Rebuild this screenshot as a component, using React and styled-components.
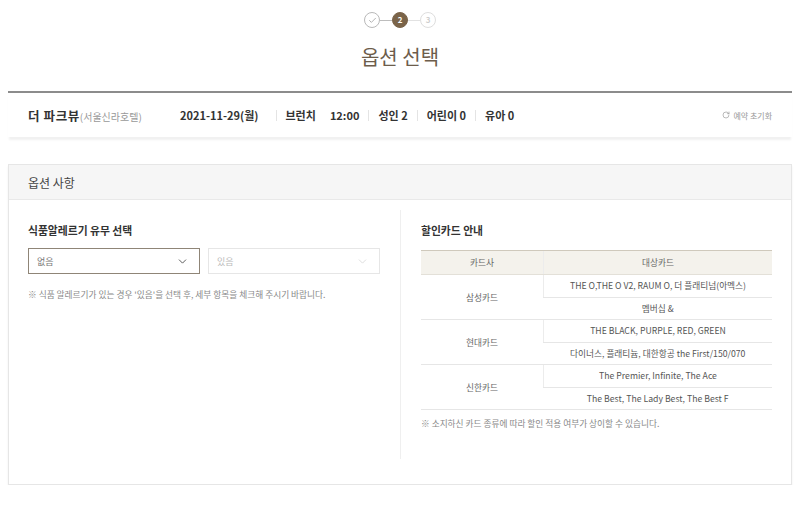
import React from 'react'
import styled, { createGlobalStyle } from 'styled-components'
import { ChevronDown, RotateCw, Check } from 'lucide-react'

const GlobalStyle = createGlobalStyle`
    body {
        margin: 0;
        background: #fff;
        font-family: 'Noto Sans CJK KR', 'Noto Sans', sans-serif;
        color: #333;
    }
`

const Page = styled.div`
    width: 800px;
    padding: 0 8px;
    box-sizing: border-box;
`
const Steps = styled.div`
    display: flex;
    justify-content: center;
    align-items: center;
    padding-top: 12px;
`
const Step = styled.div`
    width: 16px;
    height: 16px;
    box-sizing: border-box;
    border-radius: 50%;
    display: flex;
    align-items: center;
    justify-content: center;
    font-size: 8px;
    font-weight: 700;
    line-height: 1;
    border: 1px solid ${p => (p.$state === 'done' ? '#b9b9b9' : p.$state === 'active' ? '#7a6449' : '#dedede')};
    background: ${p => (p.$state === 'active' ? '#7a6449' : '#fff')};
    color: ${p => (p.$state === 'active' ? '#fff' : '#cfcfcf')};
`
const StepLine = styled.div`
    width: 12px;
    height: 1px;
    background: ${p => p.$color};
`
const Title = styled.h1`
    margin: 15px 0 0;
    text-align: center;
    font-size: 20px;
    line-height: 28px;
    font-weight: 400;
    color: #6d5d4b;
`
const Summary = styled.div`
    margin-top: 20px;
    border-top: 2px solid #8c8c8c;
    height: 44px;
    padding: 0 20px;
    display: flex;
    align-items: center;
    box-shadow: 0 4px 2px -1px #f1f1f1;
`
const Venue = styled.div`
    width: 152px;
    font-size: 12.5px;
    font-weight: 700;
    color: #333;
    white-space: nowrap;
    letter-spacing: 0.6px;
    small {
        font-size: 10px;
        font-weight: 400;
        color: #999;
        letter-spacing: 0;
    }
`
const Info = styled.span`
    font-size: 11px;
    font-weight: 700;
    color: #333;
    margin-right: ${p => p.$gap || 0}px;
    white-space: nowrap;
`
const Sep = styled.span`
    width: 1px;
    height: 11px;
    background: #e4e4e4;
    margin: 0 9px;
`
const Reset = styled.div`
    margin-left: auto;
    display: flex;
    align-items: center;
    gap: 3px;
    font-size: 8px;
    color: #999;
`
const Panel = styled.section`
    margin-top: 27px;
    border: 1px solid #e6e6e6;
    box-shadow: 0 2px 2px #f0f0f0;
`
const PanelHead = styled.div`
    height: 34px;
    background: #f6f6f6;
    border-bottom: 1px solid #e9e9e9;
    display: flex;
    align-items: center;
    padding: 0 19px;
    font-size: 12px;
    color: #444;
`
const PanelBody = styled.div`
    padding: 10px 19px 25px;
    display: grid;
    grid-template-columns: 1fr 1fr;
`
const Column = styled.div`
    padding: 12px ${p => (p.$left ? '20px 28px 0' : '0 28px 20px')};
    border-left: ${p => (p.$left ? 'none' : '1px solid #efefef')};
`
const SubTitle = styled.h3`
    margin: 0;
    font-size: 10.8px;
    line-height: 16px;
    font-weight: 700;
    color: #333;
`
const Selects = styled.div`
    margin-top: 10px;
    display: flex;
    gap: 8px;
`
const Select = styled.div`
    flex: 1;
    height: 26px;
    box-sizing: border-box;
    border: 1px solid ${p => (p.$active ? '#8f8577' : '#e6e6e6')};
    display: flex;
    align-items: center;
    justify-content: space-between;
    padding: 0 10px 0 8px;
    font-size: 9px;
    color: ${p => (p.$active ? '#777' : '#bbb')};
    svg {
        color: ${p => (p.$active ? '#444' : '#ccc')};
    }
`
const Note = styled.p`
    margin: ${p => p.$top}px 0 0;
    font-size: 8.7px;
    line-height: 14px;
    color: #888;
`
const Table = styled.table`
    margin-top: 12px;
    width: 100%;
    border-collapse: collapse;
    font-size: 8.7px;
    color: #555;
    th {
        height: 23px;
        padding: 0;
        background: #f4f2ec;
        border-top: 1px solid #cfc9bc;
        border-bottom: 1px solid #e3e0d8;
        font-weight: 400;
        color: #666;
    }
    td {
        height: 21.5px;
        text-align: center;
        border-bottom: 1px solid #e6e6e6;
        padding: 0;
    }
    td + td,
    th + th {
        border-left: 1px solid #ececec;
    }
`
const CardName = styled.td`
    width: 122px;
    color: #666;
`

const cards = [
    { name: '삼성카드', list: ['THE O,THE O V2, RAUM O, 더 플래티넘(아멕스)', '멤버십 &'] },
    { name: '현대카드', list: ['THE BLACK, PURPLE, RED, GREEN', '다이너스, 플래티늄, 대한항공 the First/150/070'] },
    { name: '신한카드', list: ['The Premier, Infinite, The Ace', 'The Best, The Lady Best, The Best F'] },
]

function App() {
    return (
        <>
            <GlobalStyle />
            <Page>
                <Steps>
                    <Step $state="done">
                        <Check size={9} strokeWidth={2} color="#9a9a9a" />
                    </Step>
                    <StepLine $color="#bdbdbd" />
                    <Step $state="active">2</Step>
                    <StepLine $color="#e2e2e2" />
                    <Step>3</Step>
                </Steps>
                <Title>옵션 선택</Title>

                <Summary>
                    <Venue>
                        더 파크뷰<small>(서울신라호텔)</small>
                    </Venue>
                    <Info $gap={8}>2021-11-29(월)</Info>
                    <Sep />
                    <Info $gap={14}>브런치</Info>
                    <Info>12:00</Info>
                    <Sep />
                    <Info>성인 2</Info>
                    <Sep />
                    <Info>어린이 0</Info>
                    <Sep />
                    <Info>유아 0</Info>
                    <Reset>
                        <RotateCw size={8} strokeWidth={2} />
                        예약 초기화
                    </Reset>
                </Summary>

                <Panel>
                    <PanelHead>옵션 사항</PanelHead>
                    <PanelBody>
                        <Column $left>
                            <SubTitle>식품알레르기 유무 선택</SubTitle>
                            <Selects>
                                <Select $active>
                                    없음
                                    <ChevronDown size={13} strokeWidth={1.6} />
                                </Select>
                                <Select>
                                    있음
                                    <ChevronDown size={13} strokeWidth={1.2} />
                                </Select>
                            </Selects>
                            <Note $top={14}>
                                ※ 식품 알레르기가 있는 경우 '있음'을 선택 후, 세부 항목을 체크해 주시기 바랍니다.
                            </Note>
                        </Column>
                        <Column>
                            <SubTitle>할인카드 안내</SubTitle>
                            <Table>
                                <thead>
                                    <tr>
                                        <th>카드사</th>
                                        <th>대상카드</th>
                                    </tr>
                                </thead>
                                <tbody>
                                    {cards.map(card =>
                                        card.list.map((item, i) => (
                                            <tr key={card.name + i}>
                                                {i === 0 && <CardName rowSpan={2}>{card.name}</CardName>}
                                                <td>{item}</td>
                                            </tr>
                                        ))
                                    )}
                                </tbody>
                            </Table>
                            <Note $top={7}>※ 소지하신 카드 종류에 따라 할인 적용 여부가 상이할 수 있습니다.</Note>
                        </Column>
                    </PanelBody>
                </Panel>
            </Page>
        </>
    )
}

export default App
